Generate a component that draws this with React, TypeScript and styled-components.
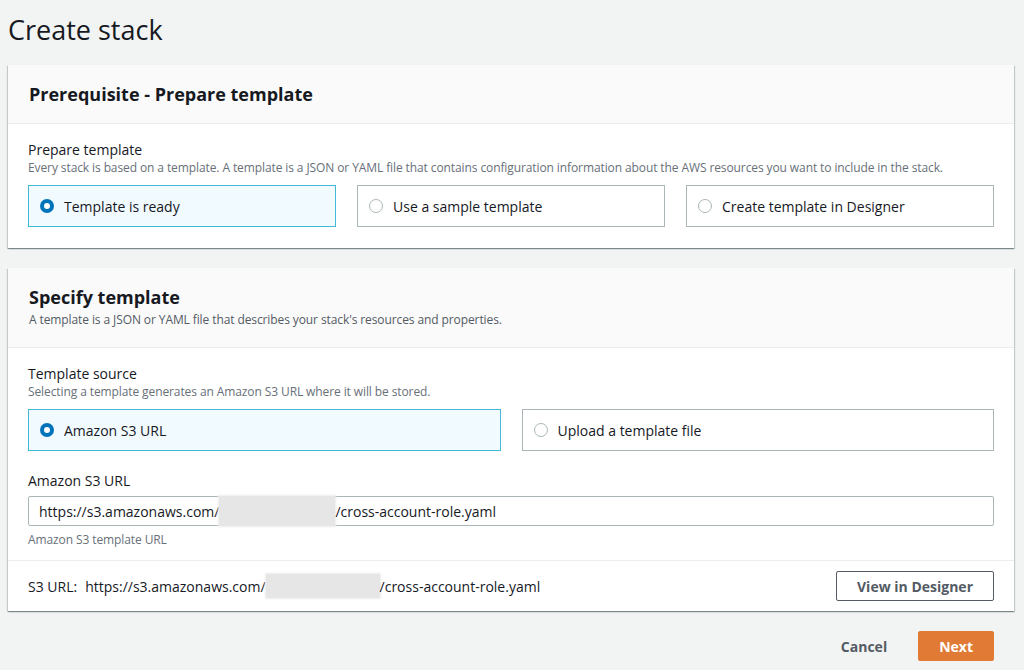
import React, { useState } from 'react'
import styled, { createGlobalStyle } from 'styled-components'

const GlobalStyle = createGlobalStyle`
  body {
    margin: 0;
    background: #f2f3f3;
    font-family: 'Open Sans', 'Liberation Sans', sans-serif;
    color: #16191f;
  }
`

const Page = styled.div`
  padding: 10px 10px 0 8px;
`

const PageTitle = styled.h1`
  margin: 0 0 15px;
  font-size: 27px;
  line-height: 40px;
  font-weight: 400;
  color: #16191f;
`

const Panel = styled.section`
  background: #fff;
  margin-bottom: 20px;
  box-shadow: 0 1px 1px 0 rgba(0, 28, 36, 0.3), 1px 1px 1px 0 rgba(0, 28, 36, 0.15),
    -1px 1px 1px 0 rgba(0, 28, 36, 0.15);
`

const PanelHeader = styled.div`
  background: #fafafa;
  border-bottom: 1px solid #eaeded;
  padding: 18px 20px 18px 21px;
`

const PanelTitle = styled.h2`
  margin: 0;
  font-size: 18px;
  line-height: 22px;
  font-weight: 700;
`

const PanelDescription = styled.p`
  margin: 4px 0 1px;
  font-size: 12px;
  line-height: 16px;
  letter-spacing: -0.1px;
  color: #545b64;
`

const PanelBody = styled.div`
  padding: 16px 20px 21px 20px;
`

const Field = styled.div<{ $gap?: number }>`
  margin-top: ${({ $gap }) => $gap ?? 0}px;
`

const Label = styled.div`
  font-size: 14px;
  line-height: 20px;
`

const Hint = styled.div`
  font-size: 12px;
  line-height: 16px;
  letter-spacing: -0.1px;
  color: #687078;
`

const Tiles = styled.div<{ $cols: number }>`
  display: grid;
  grid-template-columns: repeat(${({ $cols }) => $cols}, 1fr);
  gap: 21px;
  margin-top: 9px;
`

const Tile = styled.label<{ $selected: boolean }>`
  display: flex;
  align-items: center;
  gap: 10px;
  height: 42px;
  box-sizing: border-box;
  padding: 0 11px;
  border: 1px solid ${({ $selected }) => ($selected ? '#44b9d6' : '#aab7b8')};
  background: ${({ $selected }) => ($selected ? '#f1faff' : '#fff')};
  font-size: 14px;
  cursor: pointer;
`

const Radio = styled.span<{ $checked: boolean }>`
  width: 14px;
  height: 14px;
  box-sizing: border-box;
  border-radius: 50%;
  background: #fff;
  border: ${({ $checked }) => ($checked ? '4px solid #0073bb' : '1px solid #aab7b8')};
  flex: none;
`

const Input = styled.div`
  margin-top: 5px;
  height: 30px;
  box-sizing: border-box;
  border: 1px solid #aab7b8;
  border-radius: 2px;
  padding: 0 10px;
  display: flex;
  align-items: center;
  font-size: 14px;
  white-space: nowrap;
  margin-bottom: 6px;
`

const Redacted = styled.span<{ $w: number; $h: number }>`
  display: inline-block;
  width: ${({ $w }) => $w}px;
  height: ${({ $h }) => $h}px;
  background: #e6e6e6;
  box-shadow: 0 0 2px 1px #ececec;
  vertical-align: middle;
`

const PanelFooter = styled.div`
  border-top: 1px solid #eaeded;
  display: flex;
  align-items: center;
  justify-content: space-between;
  padding: 10px 20px 10px 20px;
  margin-top: -9px;
`

const UrlText = styled.div`
  font-size: 14px;
  display: flex;
  align-items: center;
  white-space: nowrap;
`

const UrlKey = styled.span`
  margin-right: 8px;
`

const Button = styled.button<{ $variant: 'normal' | 'primary' | 'link' }>`
  height: 30px;
  box-sizing: border-box;
  padding: 0 20px;
  font-family: inherit;
  font-size: 14px;
  font-weight: 700;
  border-radius: 2px;
  cursor: pointer;
  border: 1px solid
    ${({ $variant }) => ($variant === 'normal' ? '#545b64' : $variant === 'primary' ? '#e07a35' : 'transparent')};
  background: ${({ $variant }) => ($variant === 'primary' ? '#e07a35' : $variant === 'normal' ? '#fff' : 'transparent')};
  color: ${({ $variant }) => ($variant === 'primary' ? '#fff' : '#545b64')};
`

const Actions = styled.div`
  display: flex;
  justify-content: flex-end;
  gap: 10px;
  padding-right: 20px;
`

type Option = { id: string; label: string }

function TileGroup({ options, value, onChange }: { options: Option[]; value: string; onChange: (v: string) => void }) {
  return (
    <Tiles $cols={options.length}>
      {options.map(o => (
        <Tile key={o.id} $selected={o.id === value} onClick={() => onChange(o.id)}>
          <Radio $checked={o.id === value} />
          {o.label}
        </Tile>
      ))}
    </Tiles>
  )
}

export default function App() {
  const [prepare, setPrepare] = useState('ready')
  const [source, setSource] = useState('s3')

  return (
    <Page>
      <GlobalStyle />
      <PageTitle>Create stack</PageTitle>

      <Panel>
        <PanelHeader>
          <PanelTitle>Prerequisite - Prepare template</PanelTitle>
        </PanelHeader>
        <PanelBody>
          <Label>Prepare template</Label>
          <Hint>
            Every stack is based on a template. A template is a JSON or YAML file that contains configuration information
            about the AWS resources you want to include in the stack.
          </Hint>
          <TileGroup
            value={prepare}
            onChange={setPrepare}
            options={[
              { id: 'ready', label: 'Template is ready' },
              { id: 'sample', label: 'Use a sample template' },
              { id: 'designer', label: 'Create template in Designer' }
            ]}
          />
        </PanelBody>
      </Panel>

      <Panel>
        <PanelHeader>
          <PanelTitle>Specify template</PanelTitle>
          <PanelDescription>
            A template is a JSON or YAML file that describes your stack's resources and properties.
          </PanelDescription>
        </PanelHeader>
        <PanelBody>
          <Label>Template source</Label>
          <Hint>Selecting a template generates an Amazon S3 URL where it will be stored.</Hint>
          <TileGroup
            value={source}
            onChange={setSource}
            options={[
              { id: 's3', label: 'Amazon S3 URL' },
              { id: 'upload', label: 'Upload a template file' }
            ]}
          />
          <Field $gap={20}>
            <Label>Amazon S3 URL</Label>
            <Input>
              https://s3.amazonaws.com/
              <Redacted $w={116} $h={30} />
              /cross-account-role.yaml
            </Input>
            <Hint>Amazon S3 template URL</Hint>
          </Field>
        </PanelBody>
        <PanelFooter>
          <UrlText>
            <UrlKey>S3 URL:</UrlKey>
            https://s3.amazonaws.com/
            <Redacted $w={114} $h={24} />
            /cross-account-role.yaml
          </UrlText>
          <Button $variant="normal">View in Designer</Button>
        </PanelFooter>
      </Panel>

      <Actions>
        <Button $variant="link">Cancel</Button>
        <Button $variant="primary">Next</Button>
      </Actions>
    </Page>
  )
}
